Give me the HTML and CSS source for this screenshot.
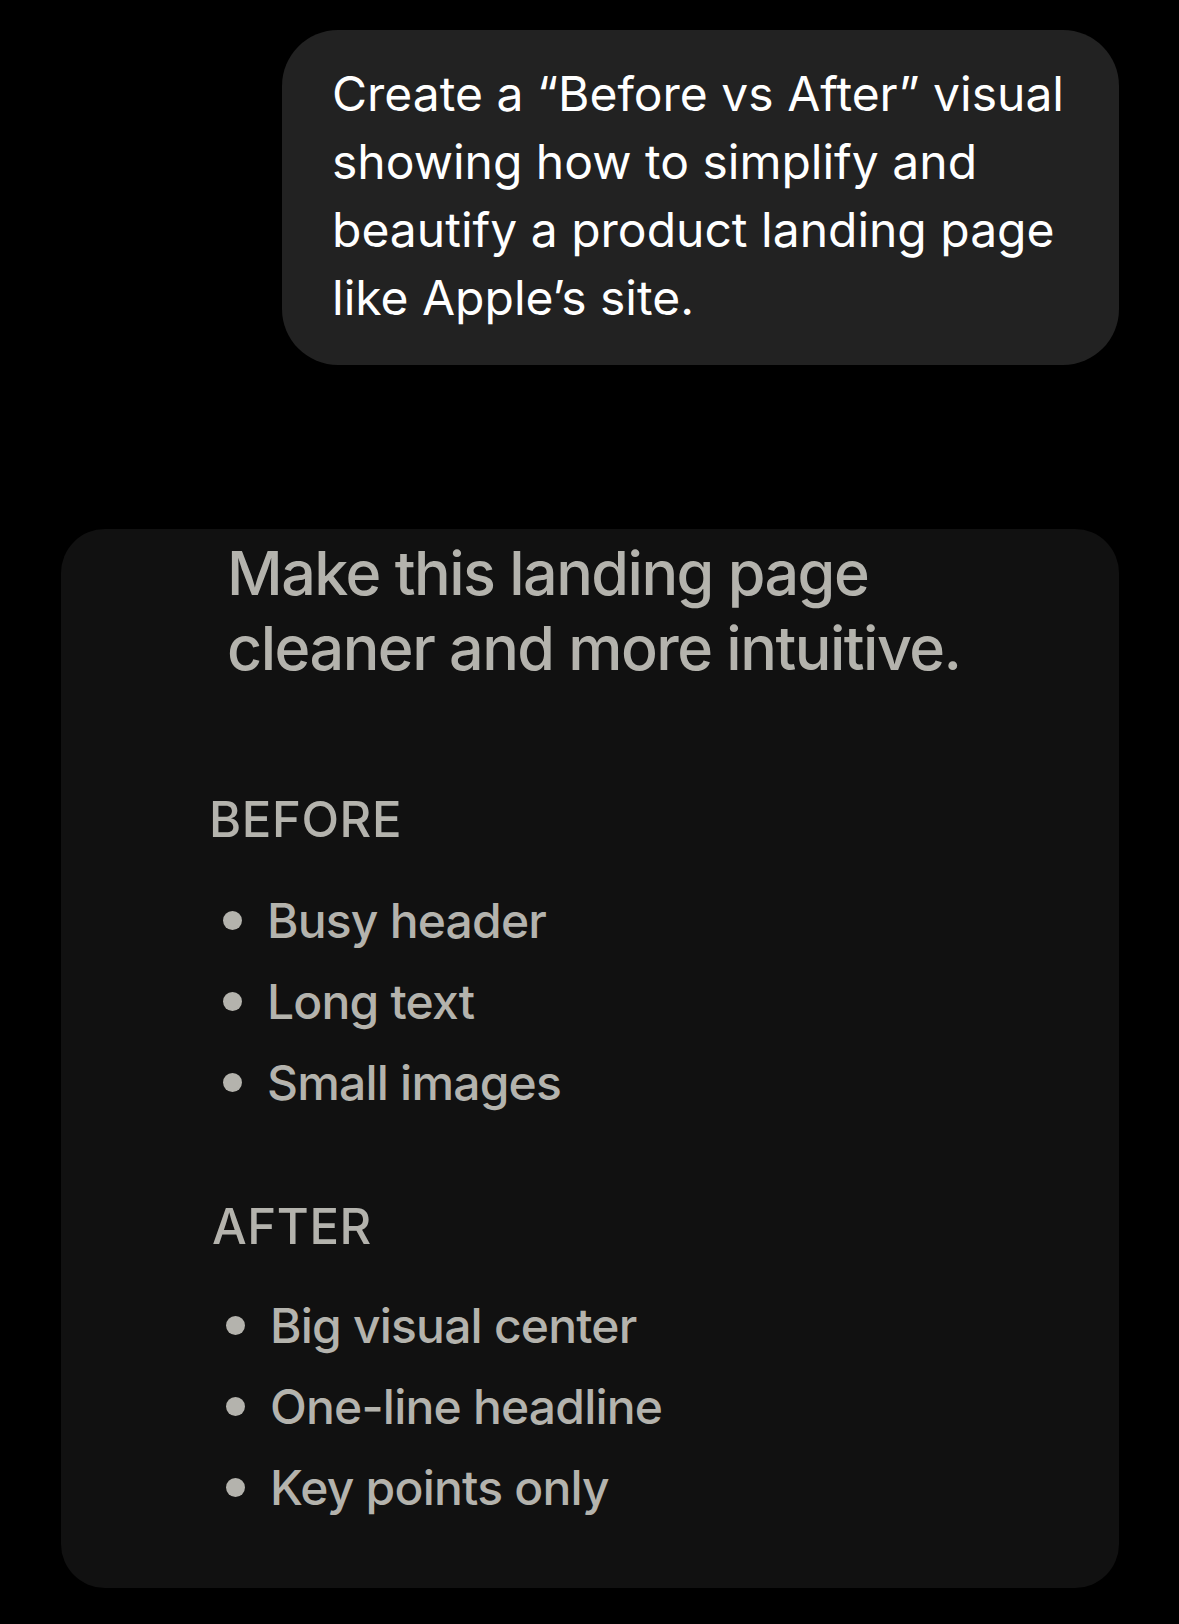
FILE: index.html
```html
<!DOCTYPE html>
<html lang="en">
<head>
<meta charset="utf-8">
<title>Before vs After</title>
<link rel="stylesheet" href="styles.css">
</head>
<body>
<main class="chat">
  <div class="user-bubble">
    <p class="user-text">Create a “Before vs After” visual showing how to simplify and beautify a product landing page like Apple’s site.</p>
  </div>

  <section class="card">
    <h1 class="card-title">Make this landing page<br>cleaner and more intuitive.</h1>

    <div class="group group-before">
      <h2 class="group-label">BEFORE</h2>
      <ul class="items">
        <li class="item"><span class="dot"></span><span class="item-text">Busy header</span></li>
        <li class="item"><span class="dot"></span><span class="item-text">Long text</span></li>
        <li class="item"><span class="dot"></span><span class="item-text">Small images</span></li>
      </ul>
    </div>

    <div class="group group-after">
      <h2 class="group-label">AFTER</h2>
      <ul class="items">
        <li class="item"><span class="dot"></span><span class="item-text">Big visual center</span></li>
        <li class="item"><span class="dot"></span><span class="item-text">One-line headline</span></li>
        <li class="item"><span class="dot"></span><span class="item-text">Key points only</span></li>
      </ul>
    </div>
  </section>
</main>
</body>
</html>
```

FILE: styles.css
```css
html, body {
  margin: 0;
  padding: 0;
  background: #000;
}

body {
  width: 1179px;
  height: 1624px;
  overflow: hidden;
  font-family: "Inter", "Liberation Sans", sans-serif;
}

.chat {
  display: flex;
  flex-direction: column;
  padding-top: 30px;
}

.user-bubble {
  margin-left: 282px;
  width: 837px;
  box-sizing: border-box;
  background: #222222;
  border-radius: 56px;
  padding: 30px 30px 33px 50px;
}

.user-text {
  margin: 0;
  color: #ffffff;
  font-size: 48px;
  line-height: 68px;
  font-weight: 400;
  letter-spacing: 0;
}

.card {
  margin-top: 164px;
  margin-left: 61px;
  width: 1058px;
  box-sizing: border-box;
  background: #111111;
  border-radius: 44px;
  padding: 7px 40px 60px 0;
  color: #b4b3ad;
}

.card-title {
  margin: 0 0 0 166px;
  font-size: 61px;
  line-height: 75px;
  font-weight: 500;
  letter-spacing: -1.5px;
}

.group-label {
  margin: 0;
  font-size: 49px;
  line-height: 60px;
  font-weight: 500;
  letter-spacing: 0.6px;
}

.group-before {
  margin: 104px 0 0 148px;
}

.group-after {
  margin: 74px 0 0 151px;
}

.items {
  list-style: none;
  margin: 30px 0 0 0;
  padding: 0;
  display: flex;
  flex-direction: column;
}

.group-after .items {
  margin-top: 28px;
}

.item {
  display: flex;
  align-items: center;
  height: 81px;
  font-size: 48px;
  font-weight: 500;
}

.dot {
  width: 19px;
  height: 19px;
  border-radius: 50%;
  background: #b4b3ad;
  margin-left: 14px;
  margin-right: 25px;
  flex: none;
}

.item-text {
  line-height: 81px;
  letter-spacing: -0.8px;
}
```
